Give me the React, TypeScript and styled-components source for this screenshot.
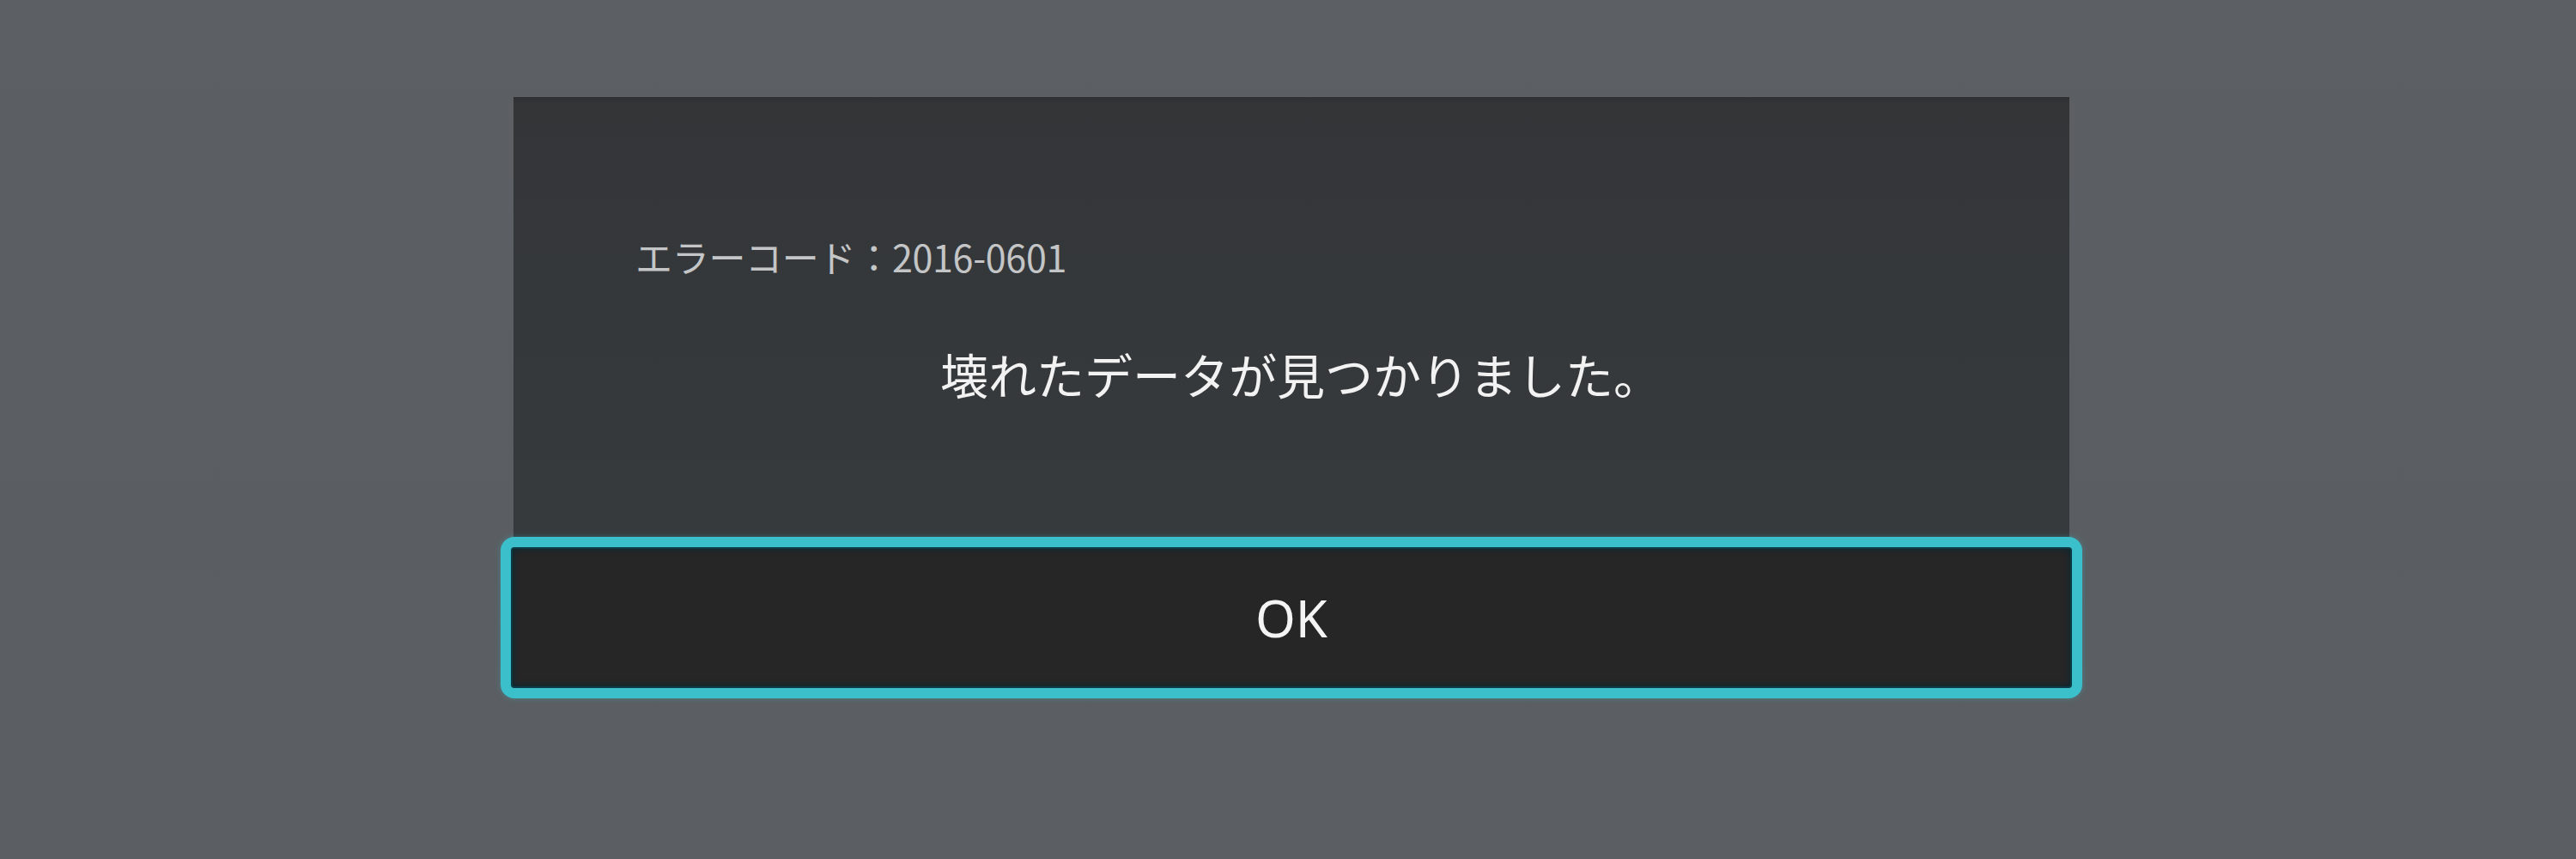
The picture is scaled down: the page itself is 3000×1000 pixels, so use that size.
import * as React from "react";
import styled, { createGlobalStyle } from "styled-components";

const GlobalStyle = createGlobalStyle`
  html, body {
    margin: 0;
    padding: 0;
    background: #5a5e63;
  }
  body {
    font-family: "Noto Sans CJK JP", "Noto Sans", sans-serif;
  }
`;

const Screen = styled.div`
  width: 3000px;
  height: 1000px;
  box-sizing: border-box;
  padding-top: 113px;
  background: linear-gradient(180deg, #5c6065 0%, #5a5e63 60%, #5b5f63 100%);
  display: flex;
  justify-content: center;
`;

const Dialog = styled.div`
  width: 1842px;
  margin-left: 8px;
  display: flex;
  flex-direction: column;
  align-items: center;
`;

const Body = styled.div`
  width: 1812px;
  height: 512px;
  box-sizing: border-box;
  padding: 160px 142px 0;
  background: linear-gradient(180deg, #302e31 0px, #333537 8px, #35383a 40%, #373a3c 100%);
  display: flex;
  flex-direction: column;
`;

const ErrorCode = styled.div`
  font-size: 43px;
  line-height: 50px;
  color: #c3c5c6;
  letter-spacing: -0.3px;
`;

const Message = styled.div`
  margin: 78px -142px 0;
  padding-left: 22px;
  font-size: 56px;
  line-height: 68px;
  color: #f2f2f2;
  text-align: center;
`;

const OkButton = styled.button`
  width: 1842px;
  height: 188px;
  box-sizing: border-box;
  border: 12px solid #3bbfca;
  border-radius: 16px;
  background: #262627;
  box-shadow: inset 0 0 0 2px #0d3b45, inset 0 0 6px 3px rgba(5, 40, 50, 0.8),
    0 0 6px rgba(59, 191, 202, 0.35);
  color: #f4f4f4;
  font-family: "Noto Sans", "Noto Sans CJK JP", sans-serif;
  font-size: 60px;
  line-height: 1;
  padding: 0;
  display: flex;
  align-items: center;
  justify-content: center;
  cursor: pointer;
`;

export default function App() {
  return (
    <>
      <GlobalStyle />
      <Screen>
        <Dialog>
          <Body>
            <ErrorCode>エラーコード：2016-0601</ErrorCode>
            <Message>壊れたデータが見つかりました。</Message>
          </Body>
          <OkButton>OK</OkButton>
        </Dialog>
      </Screen>
    </>
  );
}
